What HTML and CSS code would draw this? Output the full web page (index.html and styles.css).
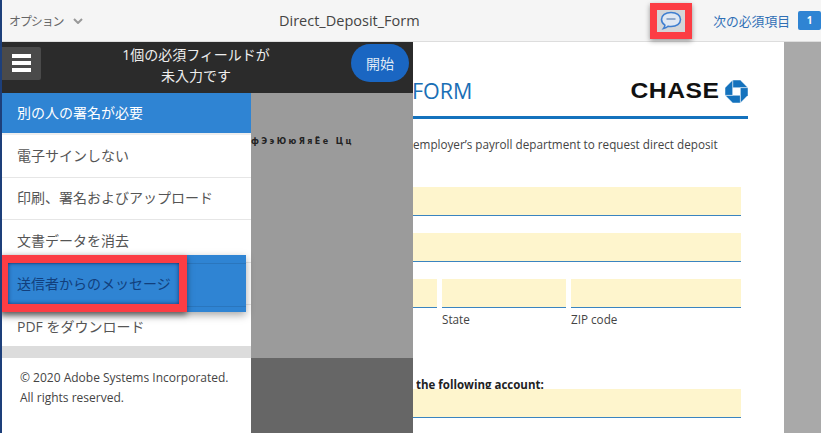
FILE: index.html
```html
<!DOCTYPE html>
<html lang="ja">
<head>
  <meta charset="utf-8">
  <title>Direct_Deposit_Form</title>
  <link rel="stylesheet" href="styles.css">
</head>
<body>
<header class="topbar">
  <div class="options">オプション
    <svg class="chevron" width="10" height="6" viewBox="0 0 10 6"><path d="M1 1l4 4 4-4" fill="none" stroke="#999" stroke-width="2"/></svg>
  </div>
  <div class="doc-name">Direct_Deposit_Form</div>
  <div class="msg-btn">
    <svg width="24" height="20" viewBox="0 0 24 20">
      <path d="M12 1.500c5.600 0 9.500 2.900 9.500 7s-3.900 7-9.500 7c-1 0-2-.1-2.900-.3-1.300 1.300-3 2-4.600 2.300.8-1 1.300-2.100 1.400-3.300C3.900 12.900 2.500 10.900 2.500 8.500c0-4.100 3.900-7 9.500-7z" fill="#dfe8f3" stroke="#3f7fd0" stroke-width="1.600"/>
      <path d="M7.500 8h9" stroke="#8fa9cc" stroke-width="2"/>
    </svg>
  </div>
  <div class="next-field">次の必須項目</div>
  <div class="count">1</div>
</header>

<div class="main">
  <aside class="side">
    <div class="banner">
      <button class="burger"><i></i><i></i><i></i></button>
      <div class="banner-text">1個の必須フィールドが<br>未入力です</div>
      <button class="start">開始</button>
    </div>
    <div class="side-body">
      <div class="menu">
        <ul class="menu-list">
          <li class="menu-item active">別の人の署名が必要</li>
          <li class="menu-item">電子サインしない</li>
          <li class="menu-item">印刷、署名およびアップロード</li>
          <li class="menu-item">文書データを消去</li>
          <li class="menu-item flagged">
            <div class="flag"></div>
            <div class="flag-box"></div>
            <span class="flag-text">送信者からのメッセージ</span>
          </li>
          <li class="menu-item last">PDF をダウンロード</li>
        </ul>
        <div class="menu-gap"></div>
        <p class="copyright">© 2020 Adobe Systems Incorporated.<br>All rights reserved.</p>
      </div>
      <div class="shade">
        <div class="shade-top"><span class="glyphs">фЭэЮюЯяЁе Цц</span></div>
        <div class="shade-bottom"></div>
      </div>
    </div>
  </aside>

  <main class="doc">
    <div class="doc-head">
      <h1 class="form-title">FORM</h1>
      <div class="chase">
        <span class="chase-word">CHASE</span>
        <svg width="23" height="23" viewBox="0 0 24 24">
          <g fill="#1472bd" stroke="#fff" stroke-width=".5">
            <path d="M8 0h8l8 8H8z"/>
            <path d="M24 8v8l-8 8V8z"/>
            <path d="M16 24H8l-8-8h16z"/>
            <path d="M0 16V8l8-8v16z"/>
          </g>
        </svg>
      </div>
    </div>
    <p class="intro">employer’s payroll department to request direct deposit</p>
    <div class="field"></div>
    <div class="field"></div>
    <div class="field-row">
      <div class="cell city"><div class="field"></div></div>
      <div class="cell state"><div class="field"></div><span class="cap">State</span></div>
      <div class="cell zip"><div class="field"></div><span class="cap">ZIP code</span></div>
    </div>
    <p class="account">the following account:</p>
    <div class="field"></div>
  </main>

  <div class="gutter"></div>
</div>
</body>
</html>
```

FILE: styles.css
```css
html,body{margin:0;padding:0;height:433px;overflow:hidden}
body{border-left:2px solid #1d3f7a;box-sizing:border-box;font-family:"Open Sans","Noto Sans CJK JP",sans-serif;background:#fff;color:#444}
ul,p,h1{margin:0;padding:0}
button{border:0;padding:0;font:inherit}

/* top bar */
.topbar{height:41px;display:flex;align-items:center;background:#f5f5f5;border-bottom:1px solid #ddd}
.options{width:277px;padding-left:7px;box-sizing:border-box;font-size:12px;color:#666;display:flex;align-items:center;letter-spacing:-1.100px}
.chevron{margin-left:9px}
.doc-name{font-size:14.500px;color:#444}
.msg-btn{margin-left:auto;width:28px;height:22px;border:7px solid #fc3d44;background:#d4d6d8;box-shadow:0 2px 5px rgba(0,0,0,.4);display:flex;align-items:center;justify-content:center}
.next-field{margin-left:21px;font-size:12.800px;color:#2f6fb5}
.count{margin-left:8px;width:23px;height:19px;background:#2f84d3;border-radius:2px;color:#fff;font-size:10px;font-weight:700;line-height:19px;text-align:center}

.main{display:flex;height:391px}

/* left panel */
.side{width:411px;flex:none;display:flex;flex-direction:column}
.banner{height:51px;background:#2b2b2b;display:flex;align-items:center;color:#eee}
.burger{width:39px;height:33px;margin-top:-9px;background:#4a4a4a;border-radius:0 2px 2px 0;display:flex;flex-direction:column;align-items:center;justify-content:center;gap:3px}
.burger i{display:block;width:19px;height:4px;background:#fff}
.banner-text{width:310px;margin-top:-5px;text-align:center;font-size:14px;line-height:21px}
.start{width:58px;height:38px;margin-top:-10px;border-radius:19px;background:#1a66c2;color:#dfe9f5;font-size:14px}

.side-body{flex:1;display:flex}
.menu{width:249px;flex:none;background:#fff}
.menu-list{list-style:none}
.menu-item{height:42.600px;box-sizing:border-box;padding:0 0 2px 15px;display:flex;align-items:center;font-size:14px;color:#555;border-bottom:1px solid #e6e6e6;position:relative}
.menu-item.active{height:42px;background:#2f84d3;color:#fff;border-bottom:2px solid #eee}
.menu-item.last{height:41px;padding-bottom:0;border-bottom:0}
.flag{position:absolute;left:-2px;top:-8px;width:246px;height:57px;background:#2f84d3;box-shadow:0 3px 8px rgba(0,0,0,.35)}
.flag::before{content:"";position:absolute;left:0;right:0;top:8px;height:42px;border-top:1px solid rgba(0,0,0,.1);border-bottom:1px solid rgba(0,0,0,.1)}
.flag-box{position:absolute;left:-2px;top:-8px;width:187px;height:57px;box-sizing:border-box;border:8px solid #fc3d44;box-shadow:0 3px 6px rgba(0,0,0,.5),inset 0 0 4px rgba(0,0,50,.6)}
.flag-text{position:relative;color:#123f7c}
.menu-gap{height:12px;background:#dcdcdc}
.copyright{padding:10px 0 0 18px;font-size:12px;line-height:20px;color:#444}

.shade{flex:1;display:flex;flex-direction:column}
.shade-top{height:265px;background:#9b9b9b}
.shade-bottom{flex:1;background:#666}
.glyphs{display:block;margin-top:44px;font:bold 8px "DejaVu Sans",sans-serif;letter-spacing:2.400px;color:#222;white-space:pre}

/* document */
.doc{width:371px;flex:none;padding-right:36px;box-sizing:border-box;overflow:hidden}
.doc-head{height:74px;display:flex;justify-content:space-between;border-bottom:3px solid #1472bd;box-sizing:content-box}
.form-title{font-size:21.500px;font-weight:400;color:#1a6fb5;margin:35px 0 0 -1px;line-height:28px}
.chase{display:flex;align-items:flex-start;gap:5px;padding-top:38px}
.chase-word{margin-top:-1px;font:bold 22px/24px "Liberation Sans",sans-serif;color:#111;letter-spacing:.5px;transform:scaleX(1.12);transform-origin:right center}
.intro{margin:17px 0 35px;font-size:11.700px;line-height:16px;color:#444;white-space:nowrap}
.field{height:28px;background:#fef5cd;border-bottom:1px solid #3a84c0;margin:0 7px 17px 0}
.field-row{display:flex;gap:5px;margin-right:7px}
.field-row .field{margin:0 0 3px}
.city{width:24px}
.state{width:124px}
.zip{flex:1}
.cap{display:block;font-size:11.700px;line-height:16px;color:#444}
.account{height:12px;overflow:hidden;margin:50px 0 0 3px;font-size:11.500px;font-weight:700;line-height:16px;color:#222}
.gutter{flex:1;background:#a9a9a9}
```
